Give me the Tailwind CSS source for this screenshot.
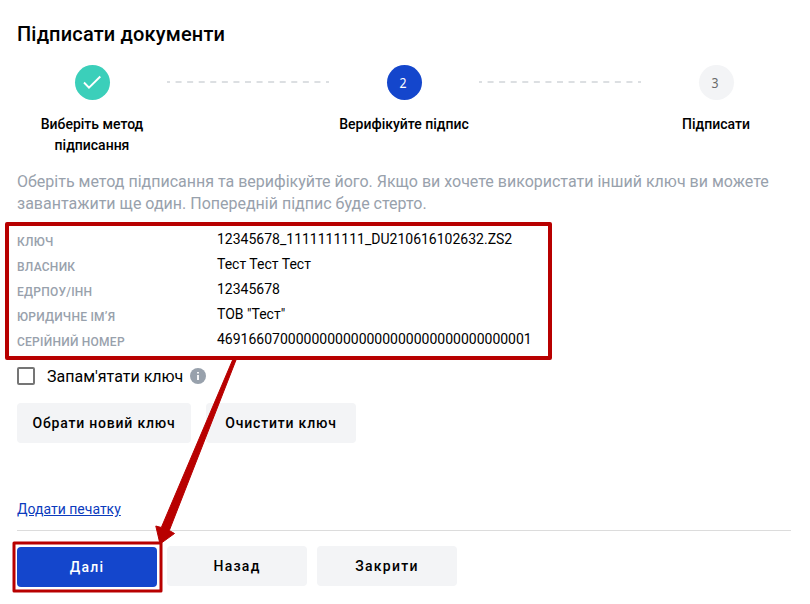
<!DOCTYPE html>
<html lang="uk">
<head>
<meta charset="utf-8">
<title>Підписати документи</title>
<script src="https://cdn.jsdelivr.net/npm/@tailwindcss/browser@4"></script>
</head>
<body class="bg-white">
<main class="relative w-[810px] h-[604px] overflow-hidden bg-white pl-[17px] pr-[19px] pt-5 font-[Roboto,sans-serif] text-black">
  <h1 class="h-[45px] text-[20px] leading-7 font-medium tracking-[0.17px]">Підписати документи</h1>

  <ol class="flex h-[106px]">
    <li class="w-[150px] flex flex-col items-center">
      <span class="w-[35px] h-[35px] rounded-full bg-[#3bcfba] flex items-center justify-center">
        <svg class="w-[35px] h-[35px]" viewBox="0 0 35 35" fill="none" stroke="#fff" stroke-width="1.9"><path d="M9 17.5 L14 22.7 L25.3 11.5"/></svg>
      </span>
      <span class="mt-[14px] w-[120px] text-center text-[14px] leading-[21px] font-medium">Виберіть метод підписання</span>
    </li>
    <li class="w-[162px] pt-4" aria-hidden="true">
      <svg class="block w-[162px] h-[2px]" viewBox="0 0 162 2"><path d="M0 1H162" stroke="#dcdfe2" stroke-width="2" stroke-dasharray="6 5.571" stroke-dashoffset="3"/></svg>
    </li>
    <li class="w-[150px] flex flex-col items-center">
      <span class="w-[35px] h-[35px] rounded-full bg-[#1446cc] text-white text-[14px] pr-px font-['Noto_Sans',sans-serif] flex items-center justify-center"><span class="inline-block scale-x-[0.88]">2</span></span>
      <span class="mt-[14px] whitespace-nowrap text-[14px] leading-[21px] font-medium">Верифікуйте підпис</span>
    </li>
    <li class="w-[162px] pt-4" aria-hidden="true">
      <svg class="block w-[162px] h-[2px]" viewBox="0 0 162 2"><path d="M0 1H162" stroke="#dcdfe2" stroke-width="2" stroke-dasharray="6 5.571" stroke-dashoffset="3"/></svg>
    </li>
    <li class="w-[150px] flex flex-col items-center">
      <span class="w-[35px] h-[35px] rounded-full bg-[#f3f4f6] text-[#6b6b6b] text-[14px] pr-px font-['Noto_Sans',sans-serif] flex items-center justify-center"><span class="inline-block scale-x-[0.88]">3</span></span>
      <span class="mt-[14px] whitespace-nowrap text-[14px] leading-[21px] font-medium">Підписати</span>
    </li>
  </ol>

  <p class="h-[58px] text-[16px] leading-[22px] text-[#98a1ac]">Оберіть метод підписання та верифікуйте його. Якщо ви хочете використати інший ключ ви можете<br>завантажити ще один. Попередній підпис буде стерто.</p>

  <dl class="grid grid-cols-[200px_1fr] auto-rows-[25px] text-[14px] leading-5">
    <dt class="pt-[3px] text-[12px] font-medium tracking-[0.25px] text-[#98a1ac]">КЛЮЧ</dt><dd>12345678_1111111111_DU210616102632.ZS2</dd>
    <dt class="pt-[3px] text-[12px] font-medium tracking-[0.25px] text-[#98a1ac]">ВЛАСНИК</dt><dd>Тест Тест Тест</dd>
    <dt class="pt-[3px] text-[12px] font-medium tracking-[0.25px] text-[#98a1ac]">ЕДРПОУ/ІНН</dt><dd>12345678</dd>
    <dt class="pt-[3px] text-[12px] font-medium tracking-[0.25px] text-[#98a1ac]">ЮРИДИЧНЕ ІМʼЯ</dt><dd>ТОВ "Тест"</dd>
    <dt class="pt-[3px] text-[12px] font-medium tracking-[0.25px] text-[#98a1ac]">СЕРІЙНИЙ НОМЕР</dt><dd>4691660700000000000000000000000000000001</dd>
  </dl>

  <label class="mt-[10px] h-6 flex items-center text-[16px]">
    <span class="w-[18px] h-[18px] rounded-[2px] border-2 border-[#757575]"></span>
    <span class="ml-3 pt-0.5 whitespace-nowrap">Запам'ятати ключ</span>
    <svg class="ml-[7px] w-4 h-4" viewBox="0 0 16 16"><circle cx="8" cy="8" r="8" fill="#98a1ac"/><path d="M7.1 4h1.8v1.6H7.1zM7.1 7h1.8v5H7.1z" fill="#fff"/></svg>
  </label>

  <div class="mt-[15px] flex gap-[15px]">
    <button class="w-[174px] h-10 rounded bg-[#f3f4f6] text-[14px] font-medium tracking-[0.8px] whitespace-nowrap">Обрати новий ключ</button>
    <button class="w-[150px] h-10 rounded bg-[#f3f4f6] text-[14px] font-medium tracking-[0.8px] whitespace-nowrap">Очистити ключ</button>
  </div>

  <div class="mt-[56px] h-8 border-b border-[#dcdcdc]">
    <a class="text-[14px] leading-5 block text-[#0b3bbd] underline">Додати печатку</a>
  </div>

  <div class="mt-[15px] flex gap-[10px] text-[14px] font-medium tracking-[1.25px]">
    <button class="mt-px w-[140px] h-10 rounded bg-[#1446cc] text-white">Далі</button>
    <button class="w-[140px] h-10 rounded bg-[#f3f4f6]">Назад</button>
    <button class="w-[140px] h-10 rounded bg-[#f3f4f6]">Закрити</button>
  </div>

  <!-- Annotations: highlighted key data, arrow, highlighted primary button -->
  <svg class="absolute inset-0 w-[810px] h-[604px] pointer-events-none" viewBox="0 0 810 604">
    <g fill="none" stroke="#b80000" stroke-linejoin="round">
      <rect x="7" y="224" width="543" height="134" stroke-width="4"/>
      <rect x="14" y="543" width="147" height="48" stroke-width="3"/>
    </g>
    <path d="M233 359 L236 360 L169.3 530.5 L174.5 533.5 L160 544 L155.8 526 L161.3 527.5 Z" fill="#b80000" stroke="#b80000" stroke-linejoin="round"/>
  </svg>
</main>
</body>
</html>
